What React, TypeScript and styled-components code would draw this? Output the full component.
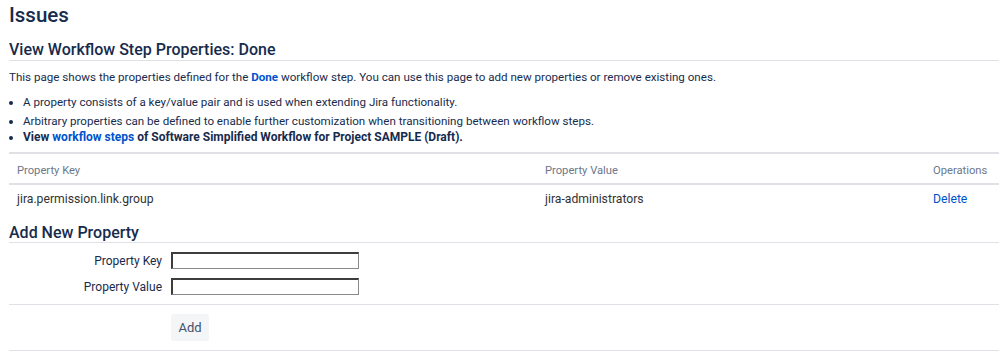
import React from "react";
import styled, { createGlobalStyle } from "styled-components";

const GlobalStyle = createGlobalStyle`
  html, body {
    margin: 0;
    padding: 0;
    background: #ffffff;
  }

  body {
    font-family: Roboto, "Liberation Sans", Arial, sans-serif;
    color: #172b4d;
  }
`;

interface PropertyRow {
  key: string;
  value: string;
}

const rows: PropertyRow[] = [
  { key: "jira.permission.link.group", value: "jira-administrators" },
];

const App: React.FC = () => {
  return (
    <Page>
      <GlobalStyle />
      <PageTitle>Issues</PageTitle>

      <SectionTitle>View Workflow Step Properties: Done</SectionTitle>
      <Intro>
        This page shows the properties defined for the <Link bold>Done</Link>{" "}
        workflow step. You can use this page to add new properties or remove
        existing ones.
      </Intro>

      <Notes>
        <Note space={3}>
          A property consists of a key/value pair and is used when extending
          Jira functionality.
        </Note>
        <Note>
          Arbitrary properties can be defined to enable further customization
          when transitioning between workflow steps.
        </Note>
        <Note strong>
          View <Link bold>workflow steps</Link> of Software Simplified Workflow
          for Project SAMPLE (Draft).
        </Note>
      </Notes>

      <Table>
        <HeadCell>Property Key</HeadCell>
        <HeadCell>Property Value</HeadCell>
        <HeadCell>Operations</HeadCell>
        {rows.map(row => (
          <React.Fragment key={row.key}>
            <Cell>{row.key}</Cell>
            <Cell>{row.value}</Cell>
            <Cell>
              <Link>Delete</Link>
            </Cell>
          </React.Fragment>
        ))}
      </Table>

      <SectionTitle compact>Add New Property</SectionTitle>
      <Form>
        <FieldRow>
          <FieldLabel>Property Key</FieldLabel>
          <TextInput type="text" />
        </FieldRow>
        <FieldRow>
          <FieldLabel>Property Value</FieldLabel>
          <TextInput type="text" />
        </FieldRow>
        <Buttons>
          <AddButton type="button">Add</AddButton>
        </Buttons>
      </Form>
    </Page>
  );
};

const Page = styled.div`
  padding: 0 0 0 9px;
  width: 990px;
`;

const PageTitle = styled.h1`
  margin: 0;
  font-size: 20.5px;
  font-weight: 500;
  line-height: 30px;
  color: #172b4d;
`;

const SectionTitle = styled.h2<{ compact?: boolean }>`
  margin: ${props => (props.compact ? "9px 0 0" : "10px 0 0")};
  font-size: 16px;
  font-weight: 500;
  line-height: ${props => (props.compact ? "18px" : "20px")};
  color: #172b4d;
  border-bottom: 1px solid #dfe1e6;
`;

const Intro = styled.p`
  margin: 8px 0 0;
  font-size: 11.6px;
  line-height: 16px;
  color: #172b4d;
`;

const Link = styled.a<{ bold?: boolean }>`
  color: #0052cc;
  font-weight: ${props => (props.bold ? 700 : 400)};
  text-decoration: none;
  cursor: pointer;
`;

const Notes = styled.ul`
  margin: 9px 0 0;
  padding: 0 0 0 14px;
`;

const Note = styled.li<{ space?: number; strong?: boolean }>`
  margin-bottom: ${props => props.space || 0}px;
  font-size: ${props => (props.strong ? "12px" : "11.6px")};
  line-height: 16px;
  font-weight: ${props => (props.strong ? 700 : 400)};
  color: #172b4d;
`;

const Table = styled.div`
  display: grid;
  grid-template-columns: 528px 388px 1fr;
  margin-top: 7px;
  border-top: 2px solid #dfe1e6;
`;

const HeadCell = styled.div`
  padding: 10px 8px 5px;
  font-size: 11.2px;
  font-weight: 400;
  line-height: 14px;
  color: #6b778c;
  border-bottom: 2px solid #dfe1e6;
`;

const Cell = styled.div`
  padding: 6px 8px 8px;
  font-size: 12.2px;
  line-height: 16px;
  color: #333333;
`;

const Form = styled.form`
  display: flex;
  flex-direction: column;
`;

const FieldRow = styled.div`
  display: grid;
  grid-template-columns: 153px 188px;
  column-gap: 9px;
  align-items: center;
  margin-top: 9px;
`;

const FieldLabel = styled.label`
  text-align: right;
  font-size: 12px;
  line-height: 16px;
  color: #172b4d;
`;

const TextInput = styled.input`
  box-sizing: border-box;
  width: 188px;
  height: 17px;
  margin: 0;
  padding: 0 3px;
  border-style: solid;
  border-color: #3d3d3d #8a8a8a #8a8a8a #3d3d3d;
  border-width: 2px 1px 1px 2px;
  background: #ffffff;
  font-size: 12px;
`;

const Buttons = styled.div`
  margin-top: 9px;
  padding: 9px 0 9px 162px;
  border-top: 1px solid #dfe1e6;
  border-bottom: 1px solid #dfe1e6;
`;

const AddButton = styled.button`
  display: block;
  width: 38px;
  height: 27px;
  padding: 0;
  border: none;
  border-radius: 3px;
  background: #f4f5f7;
  font-family: Roboto, "Liberation Sans", Arial, sans-serif;
  font-size: 13px;
  color: #42526e;
`;

export default App;
